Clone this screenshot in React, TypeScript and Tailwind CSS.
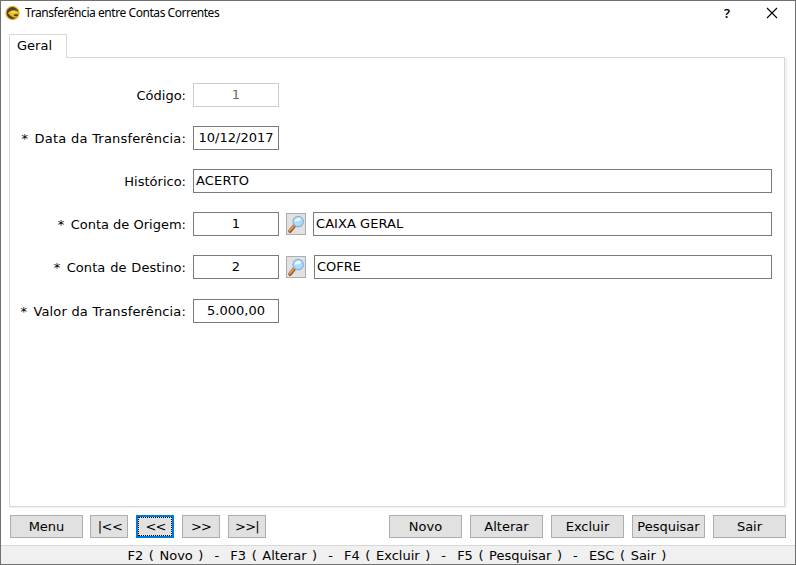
import type { ReactNode } from 'react';

function Logo() {
  return (
    <svg width="16" height="16" viewBox="0 0 16 16">
      <circle cx="7.500" cy="8" r="6.500" fill="#45443c" stroke="#e6ad12" strokeWidth="1.200" />
      <path d="M3 8C4.200 6.400 6 5.200 8.600 5.200c2.600 0 4.400 1 5.200 2.800l-.4 1.200H9.600l-1 .8 1 1.200 3.200.4-1.400 1.200C7.500 12.800 4.600 10.600 3 8z" fill="#f0c014" />
      <path d="M5.500 7.200c1.600-1 3.600-1.200 5.400-.2l-2 .9z" fill="#f9e24a" />
    </svg>
  );
}

function Magnifier() {
  return (
    <svg width="18" height="20" viewBox="0 0 18 20">
      <path d="M7.300 11.800L3 17" stroke="#8a5330" strokeWidth="3.600" strokeLinecap="round" />
      <path d="M6.800 11.800L2.800 16.400" stroke="#ef9443" strokeWidth="2.200" strokeLinecap="round" />
      <path d="M8.500 10.500l-1.400 1.600" stroke="#66778d" strokeWidth="2.600" />
      <circle cx="11.200" cy="7.600" r="5.200" fill="#a8defa" stroke="#8fb0d8" strokeWidth="1.200" />
      <path d="M7.500 7.800a4 4 0 0 1 6.600-3c-.4 2.600-3.200 2.600-6.600 3z" fill="#e6f8ff" />
    </svg>
  );
}

function Label({ children, required = false, className = '' }: { children: ReactNode; required?: boolean; className?: string }) {
  return (
    <div className="mr-[7px] flex w-[176px] justify-end pt-px">
      {required && <span className="w-[13px]">*</span>}
      <span className={`whitespace-pre ${className}`}>{children}</span>
    </div>
  );
}

function Field({ children, className = '' }: { children: ReactNode; className?: string }) {
  return <div className={`flex h-6 items-center border whitespace-pre ${className}`}>{children}</div>;
}

function Lookup() {
  return (
    <button className="mr-[7px] ml-[7px] flex h-[22px] w-5 items-center justify-center border border-[#adadad] bg-[#e1e1e1]">
      <Magnifier />
    </button>
  );
}

function Button({ children, className = '' }: { children: ReactNode; className?: string }) {
  return (
    <button className={`flex h-[23px] items-center justify-center border border-[#adadad] bg-[#e1e1e1] whitespace-pre ${className}`}>
      {children}
    </button>
  );
}

const box = 'w-[86px] justify-center border-[#7a7a7a]';

export default function App() {
  return (
    <div className="flex h-[565px] w-[796px] flex-col overflow-hidden border border-[#707070] bg-white font-['DejaVu_Sans',Verdana,sans-serif] text-[13px] leading-4 text-black">
      <header className="flex h-[33px] shrink-0 items-start pt-[4px] pl-[4px]">
        <Logo />
        <h1 className="ml-[4px] flex-1 font-['Noto_Sans','Segoe_UI',sans-serif] text-[12px] tracking-[-0.440px]">
          Transferência entre Contas Correntes
        </h1>
        <span className="mr-[34px] w-2 font-['Noto_Sans',sans-serif] text-[13px] font-semibold">?</span>
        <svg className="mt-[2px] mr-[17px]" width="12" height="12" viewBox="0 0 12 12">
          <path d="M1 1l10 10M11 1L1 11" stroke="black" strokeWidth="1.100" />
        </svg>
      </header>

      <main className="mx-2 flex h-[474px] shrink-0 flex-col">
        <div className="z-10 mb-[-1px] h-6 w-[58px] shrink-0 border border-b-0 border-[#d9d9d9] bg-white pt-[3px] pl-[7px]">Geral</div>
        <section className="flex h-[450px] w-[776px] flex-col gap-[19px] border border-[#d9d9d9] pt-[25px] shadow-[1px_1px_0_#f0f0f0,2px_1px_0_#f0f0f0]">
          <div className="flex h-6 items-center">
            <Label>Código:</Label>
            <Field className="w-[86px] justify-center border-[#cccccc] text-[#6d6d6d]">1</Field>
          </div>
          <div className="flex h-6 items-center">
            <Label required className="tracking-[0.180px] [word-spacing:0.300px]">Data da Transferência:</Label>
            <Field className={box}>10/12/2017</Field>
          </div>
          <div className="flex h-6 items-center">
            <Label>Histórico:</Label>
            <Field className="w-[579px] border-[#7a7a7a] pl-[2px] tracking-[0.150px]">ACERTO</Field>
          </div>
          <div className="flex h-6 items-center">
            <Label required>Conta de Origem:</Label>
            <Field className={box}>1</Field>
            <Lookup />
            <Field className="w-[459px] border-[#7a7a7a] pl-[2px] tracking-[0.050px]">CAIXA GERAL</Field>
          </div>
          <div className="flex h-6 items-center">
            <Label required className="tracking-[0.070px] [word-spacing:0.600px]">Conta de Destino:</Label>
            <Field className={box}>2</Field>
            <Lookup />
            <Field className="ml-px w-[458px] border-[#7a7a7a] pl-[2px]">COFRE</Field>
          </div>
          <div className="mt-px flex h-6 items-center">
            <Label required className="tracking-[0.150px] [word-spacing:0.300px]">Valor da Transferência:</Label>
            <Field className={box}>5.000,00</Field>
          </div>
        </section>
      </main>

      <nav className="mt-[7px] ml-[9px] flex w-[776px] shrink-0 gap-2">
        <Button className="mr-[-1px] w-[73px]">Menu</Button>
        <Button className="w-[38px] pl-[2px] tracking-[-0.500px]">|&lt;&lt;</Button>
        <div className="h-[23px] w-[38px] border-2 border-[#0078d7] bg-[#e1e1e1]">
          <button className="flex h-[19px] w-[34px] items-center justify-center border border-dotted border-black pl-px tracking-[-1px]">&lt;&lt;</button>
        </div>
        <Button className="w-[38px] tracking-[-1px]">&gt;&gt;</Button>
        <Button className="w-[38px] tracking-[-0.700px]">&gt;&gt;|</Button>
        <div className="ml-auto flex gap-2">
          <Button className="w-[73px]">Novo</Button>
          <Button className="w-[73px]">Alterar</Button>
          <Button className="w-[73px]">Excluir</Button>
          <Button className="w-[73px]">Pesquisar</Button>
          <Button className="w-[73px]">Sair</Button>
        </div>
      </nav>

      <footer className="mt-[7px] flex h-[19px] shrink-0 justify-center border-t border-[#d7d7d7] bg-[#f0f0f0] pt-[2px] pr-[2px] whitespace-pre [word-spacing:1.420px]">
        {'F2 ( Novo )  -  F3 ( Alterar )  -  F4 ( Excluir )  -  F5 ( Pesquisar )  -  ESC ( Sair )'}
      </footer>
    </div>
  );
}
